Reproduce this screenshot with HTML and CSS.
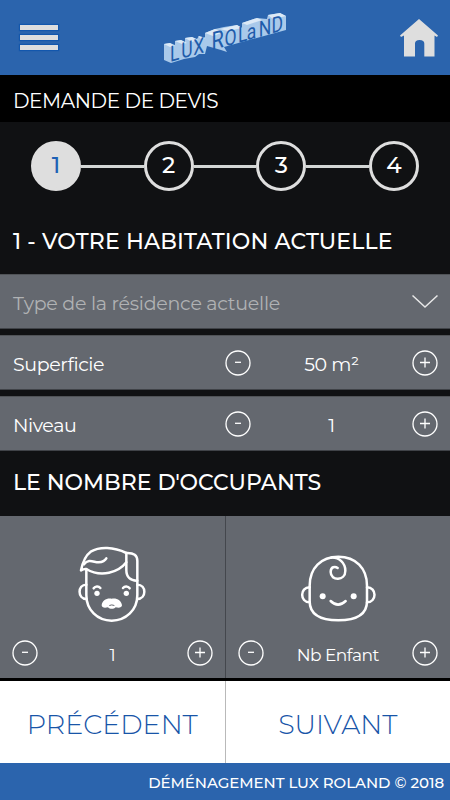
FILE: index.html
```html
<!DOCTYPE html>
<html lang="fr">
<head>
  <meta charset="UTF-8" />
  <meta name="viewport" content="width=device-width, initial-scale=1.0" />
  <title>Demande de devis</title>
  <link rel="stylesheet" href="styles.css">
</head>
<body>
<header class="header">
  <button class="menu-btn"><span></span><span></span><span></span></button>
  <svg class="logo" width="130" height="60" viewBox="158 8 130 60">
    <path class="block" d="M162 44 L168 43 L173 45 V41 L179 40 L183 42 V38 L190 37 L195 39 L197 36 L204 38 L203 41 V33 L213 29 L222 27 L235 25 L240 28 L240 23 L255 18 L265 19 L266 15 L278 13 L284 16 V30 L247 40 L222 47 L225 52 L219 50 L212 48 L205 46 L203 54 L197 54 L193 57 L182 59 L169 63 L162 60 Z" />
    <path class="top" d="M162 44 L168 43 L173 46 L168 47 Z M173 41 L179 40 L185 43 L180 44 Z M183 38 L190 37 L196 40 L190 42 Z M196 36 L204 38 L199 39 Z M203 33 L213 29 L222 32 L211 36 Z M218 29 L235 25 L240 28 L226 31 Z M240 23 L255 18 L260 20 L245 25 Z M266 15 L278 13 L284 16 L271 19 Z" />
    <text transform="matrix(0.8 -0.224 0 1 168 62)" x="0 14 29 42 52 68 85 96 111 127">LUX <tspan class="big">R</tspan>OLaND</text>
  </svg>
  <a class="home" href="#">
    <svg width="40" height="40" viewBox="0 0 40 40">
      <path d="M19 1 L38 17.500 L37 19 L34.500 17.500 V38.500 H24.300 V25.500 Q24.300 22 19.500 22 Q15 22 15 25.500 V38.500 H4 V17.500 L1 19 L0 17.500 Z" />
    </svg>
  </a>
</header>
<div class="page-title">DEMANDE DE DEVIS</div>
<main>
  <div class="steps">
    <span class="step active">1</span>
    <span class="line"></span>
    <span class="step">2</span>
    <span class="line"></span>
    <span class="step">3</span>
    <span class="line"></span>
    <span class="step">4</span>
  </div>
  <h2 class="home-title">1 - VOTRE HABITATION ACTUELLE</h2>
  <div class="row select">
    <span class="placeholder">Type de la résidence actuelle</span>
    <svg class="arrow" width="28" height="16" viewBox="0 0 28 16"><path d="M1.500 1.500 L14 13 L26.500 1.500" /></svg>
  </div>
  <div class="row">
    <span class="label">Superficie</span>
    <button class="round"><svg viewBox="0 0 26 26"><circle cx="13" cy="13" r="12" /><path d="M10 12.300 H16" /></svg></button>
    <span class="value">50 m²</span>
    <button class="round"><svg viewBox="0 0 26 26"><circle cx="13" cy="13" r="12" /><path d="M8 12.500 H18 M13 7.500 V17.500" /></svg></button>
  </div>
  <div class="row">
    <span class="label">Niveau</span>
    <button class="round"><svg viewBox="0 0 26 26"><circle cx="13" cy="13" r="12" /><path d="M10 12.300 H16" /></svg></button>
    <span class="value">1</span>
    <button class="round"><svg viewBox="0 0 26 26"><circle cx="13" cy="13" r="12" /><path d="M8 12.500 H18 M13 7.500 V17.500" /></svg></button>
  </div>
  <h2 class="people-title">LE NOMBRE D'OCCUPANTS</h2>
  <div class="people">
    <div class="card">
      <svg class="face" width="70" height="78" viewBox="235 270 210 234">
        <path d="M263 343 V420 C263 465 296 497 339 497 C382 497 416 465 416 420 V318 C416 301 406 293 383 294" />
        <path d="M247 346 C252 322 258 303 276 290 C304 274 345 276 383 294 V322 C360 352 307 369 263 342 C257 341 252 343 247 346 Z" />
        <path d="M256 328 C270 309 287 323 300 322 C312 321 319 317 323 310" />
        <path d="M383 322 V345 C383 367 396 378 416 377" />
        <path d="M263 389 C236 389 236 432 263 432 M416 389 C444 389 444 432 416 432" />
        <path d="M285 400 C290 393 300 393 305 399 M373 399 C378 393 388 393 393 400" />
        <circle class="fill" cx="295" cy="415" r="8" />
        <circle class="fill" cx="383" cy="415" r="8" />
        <path class="fill" d="M309 451 C310 436 325 428 339 431 C354 428 368 436 370 451 C370 459 359 459 351 457 C345 463 334 463 328 457 C319 459 309 459 309 451 Z" />
        <path class="mouth" d="M333 451 Q339 448 346 451" />
      </svg>
      <div class="counter">
        <button class="round"><svg viewBox="0 0 26 26"><circle cx="13" cy="13" r="12" /><path d="M10 12.300 H16" /></svg></button>
        <span class="value">1</span>
        <button class="round"><svg viewBox="0 0 26 26"><circle cx="13" cy="13" r="12" /><path d="M8 12.500 H18 M13 7.500 V17.500" /></svg></button>
      </div>
    </div>
    <div class="card">
      <svg class="face" width="78" height="70" viewBox="220 295 234 210">
        <path d="M252 393 C252 340 286 306 338 306 C390 306 424 340 424 393 V440 C424 481 393 497 338 497 C283 497 252 481 252 440 Z" />
        <path d="M316 309 C341 307 359 326 359 348 C359 379 315 380 315 352 C315 336 328 334 336 340" />
        <path d="M252 398 C222 398 222 443 252 443 M424 398 C454 398 454 443 424 443" />
        <circle class="fill" cx="291" cy="425" r="9" />
        <circle class="fill" cx="384" cy="425" r="9" />
        <path d="M315 439 Q337 461 360 439" />
      </svg>
      <div class="counter">
        <button class="round"><svg viewBox="0 0 26 26"><circle cx="13" cy="13" r="12" /><path d="M10 12.300 H16" /></svg></button>
        <span class="value">Nb Enfant</span>
        <button class="round"><svg viewBox="0 0 26 26"><circle cx="13" cy="13" r="12" /><path d="M8 12.500 H18 M13 7.500 V17.500" /></svg></button>
      </div>
    </div>
  </div>
</main>
<nav class="nav">
  <button class="prev">PRÉCÉDENT</button>
  <button class="next">SUIVANT</button>
</nav>
<footer class="footer">DÉMÉNAGEMENT LUX ROLAND © 2018</footer>
</body>
</html>
```

FILE: styles.css
```css
* {
  box-sizing: border-box;
}
body {
  margin: 0;
  height: 800px;
  display: flex;
  flex-direction: column;
  overflow: hidden;
  background-color: #101113;
  color: #fff;
  font-family: Montserrat, Inter, sans-serif;
}
button {
  border: none;
  background: none;
  padding: 0;
  font-family: inherit;
}
.header {
  height: 75px;
  background-color: #2b64ad;
  display: flex;
  justify-content: space-between;
  align-items: center;
  padding: 0 10px 0 20px;
}
.menu-btn {
  width: 38px;
  display: flex;
  flex-direction: column;
  gap: 5px;
}
.menu-btn span {
  height: 5px;
  background-color: #dedede;
  box-shadow: 0 0 1px 1px #1357ad;
}
.logo {
  margin-right: 8px;
  font-family: Roboto, sans-serif;
  font-size: 22px;
}
.logo text {
  fill: #1f5cab;
}
.logo .block {
  fill: #a9c9ea;
}
.logo .top {
  fill: #dce9f6;
}
.logo .big {
  font-size: 25px;
}
.home svg {
  display: block;
  fill: #dedede;
}
.page-title {
  height: 47px;
  line-height: 52px;
  padding-left: 13px;
  background-color: #000;
  font-size: 20px;
  letter-spacing: -0.4px;
}
.steps {
  height: 88px;
  display: flex;
  align-items: center;
  padding: 0 31px;
}
.step {
  width: 50px;
  height: 50px;
  border: 3px solid #dedede;
  border-radius: 50%;
  text-align: center;
  line-height: 43px;
  font-size: 23px;
  font-weight: 500;
}
.step.active {
  background-color: #dedede;
  color: #1d60b5;
}
.line {
  flex: 1;
  height: 3px;
  background-color: #d3d6d5;
}
h2 {
  margin: 0;
  padding-left: 13px;
  font-size: 22px;
  font-weight: 500;
  white-space: nowrap;
}
.home-title {
  height: 64px;
  line-height: 63px;
  letter-spacing: 0.15px;
}
.row {
  height: 55px;
  margin-bottom: 6px;
  display: flex;
  align-items: center;
  padding: 0 12px 0 13px;
  background-color: #64686f;
  border-top: 1px solid #505357;
  border-bottom: 1px solid #404348;
  font-size: 19px;
  letter-spacing: -0.4px;
}
.row + .row + .row {
  margin-bottom: 0;
}
.select {
  justify-content: space-between;
  padding-right: 11px;
}
.placeholder {
  color: #b0b2b4;
  padding-top: 4px;
  letter-spacing: -0.25px;
}
.arrow {
  fill: none;
  stroke: #e8e8e8;
  stroke-width: 1.500;
}
.label {
  width: 212px;
  padding-top: 4px;
}
.value {
  flex: 1;
  text-align: center;
  padding-top: 4px;
}
.round {
  width: 26px;
  height: 26px;
}
.round svg {
  display: block;
  fill: none;
  stroke: #fff;
  stroke-width: 1.300;
}
.people-title {
  height: 65px;
  line-height: 64px;
}
.people {
  height: 162px;
  display: flex;
}
.card {
  flex: 1;
  display: flex;
  flex-direction: column;
  align-items: center;
  justify-content: flex-end;
  background-color: #64686f;
  padding-bottom: 12px;
}
.card + .card {
  border-left: 1px solid #44474d;
}
.face {
  fill: none;
  stroke: #fff;
  stroke-width: 7.500;
  stroke-linecap: round;
  stroke-linejoin: round;
}
.face .fill {
  fill: #fff;
  stroke: none;
}
.face .mouth {
  stroke: #64686f;
  stroke-width: 3;
}
.counter {
  width: 100%;
  display: flex;
  align-items: center;
  padding: 0 12px;
  margin-top: 17px;
  font-size: 17px;
  letter-spacing: -0.5px;
}
.nav {
  height: 82px;
  margin-top: 3px;
  display: flex;
  background-color: #fff;
  box-shadow: 0 -3px 0 #000;
}
.nav button {
  flex: 1;
  padding-top: 4px;
  color: #1855a8;
  font-size: 27px;
  font-weight: 300;
}
.nav .next {
  border-left: 1px solid #b9b9b9;
}
.footer {
  height: 37px;
  line-height: 39px;
  padding-right: 6px;
  background-color: #2b64ad;
  text-align: right;
  font-size: 15px;
  font-weight: 500;
  letter-spacing: -0.05px;
}
```
